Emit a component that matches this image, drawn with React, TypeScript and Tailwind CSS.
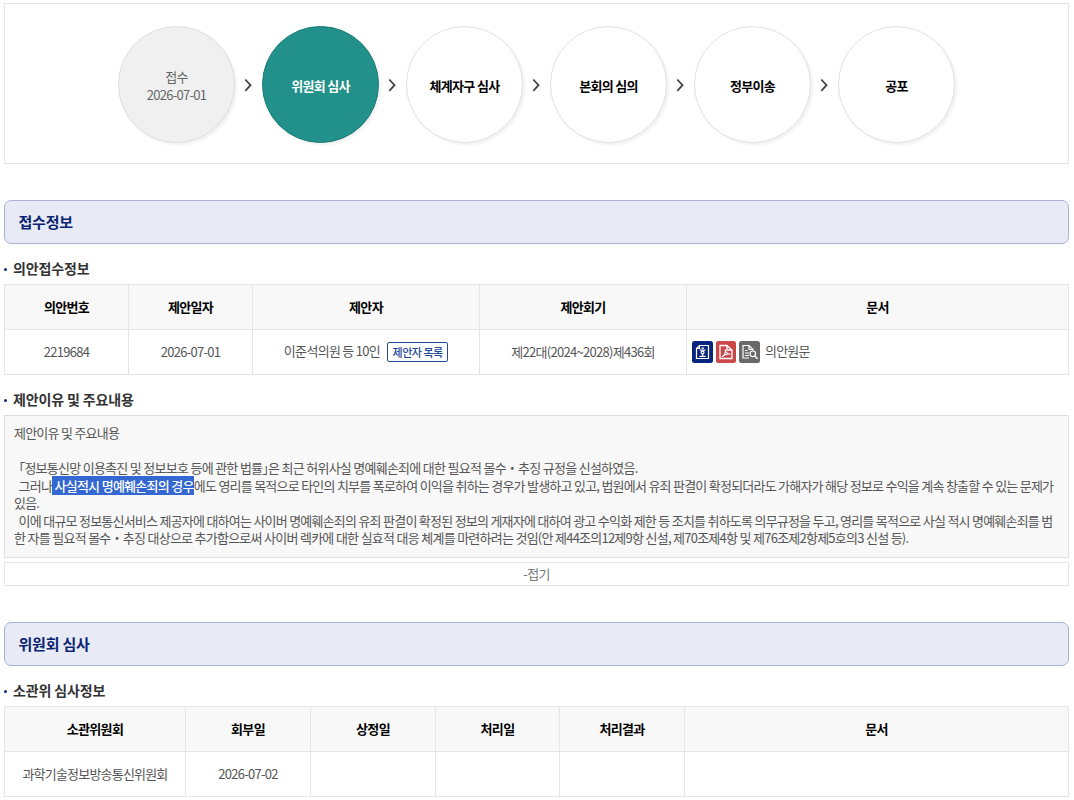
import type { ReactNode } from "react";

const steps = [
  { label: "접수", date: "2026-07-01", state: "done" },
  { label: "위원회 심사", state: "active" },
  { label: "체계자구 심사", state: "todo" },
  { label: "본회의 심의", state: "todo" },
  { label: "정부이송", state: "todo" },
  { label: "공포", state: "todo" },
];

const circleStyle: Record<string, string> = {
  done: "bg-[#f0f0f0] border-[#dedede] text-[#666] pt-[2px]",
  active: "bg-[#22918b] border-[#1b7b76] text-white font-bold pt-[2px]",
  todo: "bg-white border-[#e2e2e2] text-black font-bold pt-[2px]",
};

const Progress = () => (
  <div className="h-[161px] border border-[#e5e5e5] pt-[22px] pl-[113px] flex items-start">
    {steps.map((step, i) => (
      <div key={step.label} className="flex items-center">
        {i > 0 && (
          <svg className="w-[27px] h-[14px]" viewBox="0 0 27 14" fill="none" stroke="#444" strokeWidth="1.8">
            <path d="M10.3 1.5 L15.5 7.2 L10.3 12.9" />
          </svg>
        )}
        <div
          className={`w-[117px] h-[117px] rounded-full border shadow-[2px_2px_3px_rgba(0,0,0,0.06)] flex flex-col items-center justify-center text-center leading-[17.5px] ${circleStyle[step.state]}`}
        >
          <span>{step.label}</span>
          {step.date && <span>{step.date}</span>}
        </div>
      </div>
    ))}
  </div>
);

const SectionTitle = ({ children }: { children: ReactNode }) => (
  <h2 className="h-[44px] mt-[36px] rounded-[7px] border border-[#a9b1d4] bg-[#e8ebf5] pl-[13.5px] text-[15px] tracking-[-0.2px] leading-[42px] font-bold text-[#0b2472]">
    {children}
  </h2>
);

const SubTitle = ({ children }: { children: ReactNode }) => (
  <h3 className="h-[40px] pt-[7px] flex items-center text-[14px] tracking-[-0.15px] leading-[20px] font-bold text-[#333]">
    <span className="w-[3px] h-[3px] mt-[4px] mr-[6px] rounded-full bg-[#0b2c7c]" />
    {children}
  </h3>
);

const Th = ({ children }: { children?: ReactNode }) => (
  <div className="bg-[#f8f8f8] flex items-center justify-center font-bold text-black">{children}</div>
);

const Td = ({ children }: { children?: ReactNode }) => (
  <div className="bg-white flex items-center justify-center">{children}</div>
);

const HwpIcon = () => (
  <svg width="21" height="22" viewBox="0 0 21 22" fill="none" stroke="#fff" strokeWidth="1.2">
    <rect width="21" height="22" rx="2.5" fill="#08277c" stroke="none" />
    <path d="M7.5 4.5H16.5V17.5H4.5V7.5ZM7.5 4.5V7.5H4.5" />
    <path d="M9.5 7.2H12M7.8 9.2H13.4M10.6 13V15M7.5 15.3H13.7" />
    <circle cx="10.6" cy="11.6" r="1.4" />
  </svg>
);

const PdfIcon = () => (
  <svg width="20" height="22" viewBox="0 0 20 22" fill="none" stroke="#fff" strokeWidth="1.3">
    <rect width="20" height="22" rx="2.5" fill="#ca474a" stroke="none" />
    <path d="M4 4.5H11L16 9V17.5H4ZM11 4.5V9H16" />
    <path d="M6 15.8C8.2 14.5 9.9 11.5 9.2 8.5C9.8 11.7 11.5 13.2 14.3 13.1C11.5 12.7 8.2 13.6 6 15.8Z" strokeWidth="1.1" />
  </svg>
);

const ViewerIcon = () => (
  <svg width="21" height="22" viewBox="0 0 21 22" fill="none" stroke="#fff" strokeWidth="1.2">
    <rect width="21" height="22" rx="2.5" fill="#696969" stroke="none" />
    <path d="M10 17H4V4.5H10L14 8.5V9.5M10 4.5V8.5H14" />
    <path d="M6 9.5H8.5M6 12H10M6 14.5H10" />
    <circle cx="13.8" cy="12.8" r="2.8" />
    <path d="M15.8 15L18.5 17.8" strokeWidth="1.5" />
  </svg>
);

const App = () => {
  return (
    <div className="w-[1074px] h-[800px] overflow-hidden bg-white pt-[3px] pl-[4px] pr-[5px] font-['Noto_Sans_CJK_KR',sans-serif] text-[13px] tracking-[-0.7px] text-[#555]">
      <Progress />

      <SectionTitle>접수정보</SectionTitle>
      <SubTitle>의안접수정보</SubTitle>
      <div className="grid grid-cols-[123px_123px_226px_206px_381px] grid-rows-[44px_44px] gap-px p-px bg-[#e5e5e5]">
        <Th>의안번호</Th>
        <Th>제안일자</Th>
        <Th>제안자</Th>
        <Th>제안회기</Th>
        <Th>문서</Th>
        <Td>2219684</Td>
        <Td>2026-07-01</Td>
        <Td>
          <span className="mb-[2px]">이준석의원 등 10인</span>
          <button className="ml-[7px] h-[20px] w-[61px] border border-[#254a97] rounded-[2px] text-[11px] leading-[18px] tracking-[-0.5px] font-medium text-[#1f479b]">
            제안자 목록
          </button>
        </Td>
        <Td>제22대(2024~2028)제436회</Td>
        <div className="bg-white flex items-center gap-[3px] pl-[5px]">
          <HwpIcon />
          <PdfIcon />
          <ViewerIcon />
          <span className="ml-[2px] mb-[2px] tracking-[-0.8px]">의안원문</span>
        </div>
      </div>

      <SubTitle>제안이유 및 주요내용</SubTitle>
      <div className="h-[143px] border border-[#e0e0e0] bg-[#f8f8f8] pl-[9px] pt-[8px] leading-[17.5px] tracking-[-0.8px] [word-spacing:0.2px] whitespace-pre">
        <p>제안이유 및 주요내용</p>
        <p> </p>
        <p className="tracking-[-0.77px]">{"  ｢정보통신망 이용촉진 및 정보보호 등에 관한 법률｣은 최근 허위사실 명예훼손죄에 대한 필요적 몰수・추징 규정을 신설하였음."}</p>
        <p>
          {"  그러나"}
          <mark className="bg-[#3367d1] text-white font-medium tracking-[-0.75px]">{" 사실적시 명예훼손죄의 경우"}</mark>
          에도 영리를 목적으로 타인의 치부를 폭로하여 이익을 취하는 경우가 발생하고 있고, 법원에서 유죄 판결이 확정되더라도 가해자가 해당 정보로 수익을 계속 창출할 수 있는 문제가
        </p>
        <p>있음.</p>
        <p>{"  이에 대규모 정보통신서비스 제공자에 대하여는 사이버 명예훼손죄의 유죄 판결이 확정된 정보의 게재자에 대하여 광고 수익화 제한 등 조치를 취하도록 의무규정을 두고, 영리를 목적으로 사실 적시 명예훼손죄를 범"}</p>
        <p className="tracking-[-0.77px]">한 자를 필요적 몰수・추징 대상으로 추가함으로써 사이버 렉카에 대한 실효적 대응 체계를 마련하려는 것임(안 제44조의12제9항 신설, 제70조제4항 및 제76조제2항제5호의3 신설 등).</p>
      </div>
      <button className="block w-full h-[24px] mt-[4px] border border-[#e5e5e5] leading-[22px] text-[#777]">-접기</button>

      <SectionTitle>위원회 심사</SectionTitle>
      <SubTitle>소관위 심사정보</SubTitle>
      <div className="grid grid-cols-[180px_124px_124px_123px_124px_383px] grid-rows-[44px_44px] gap-px p-px bg-[#e5e5e5]">
        <Th>소관위원회</Th>
        <Th>회부일</Th>
        <Th>상정일</Th>
        <Th>처리일</Th>
        <Th>처리결과</Th>
        <Th>문서</Th>
        <Td><span className="tracking-[-0.8px]">과학기술정보방송통신위원회</span></Td>
        <Td>2026-07-02</Td>
        <Td />
        <Td />
        <Td />
        <Td />
      </div>
    </div>
  );
};

export default App;
